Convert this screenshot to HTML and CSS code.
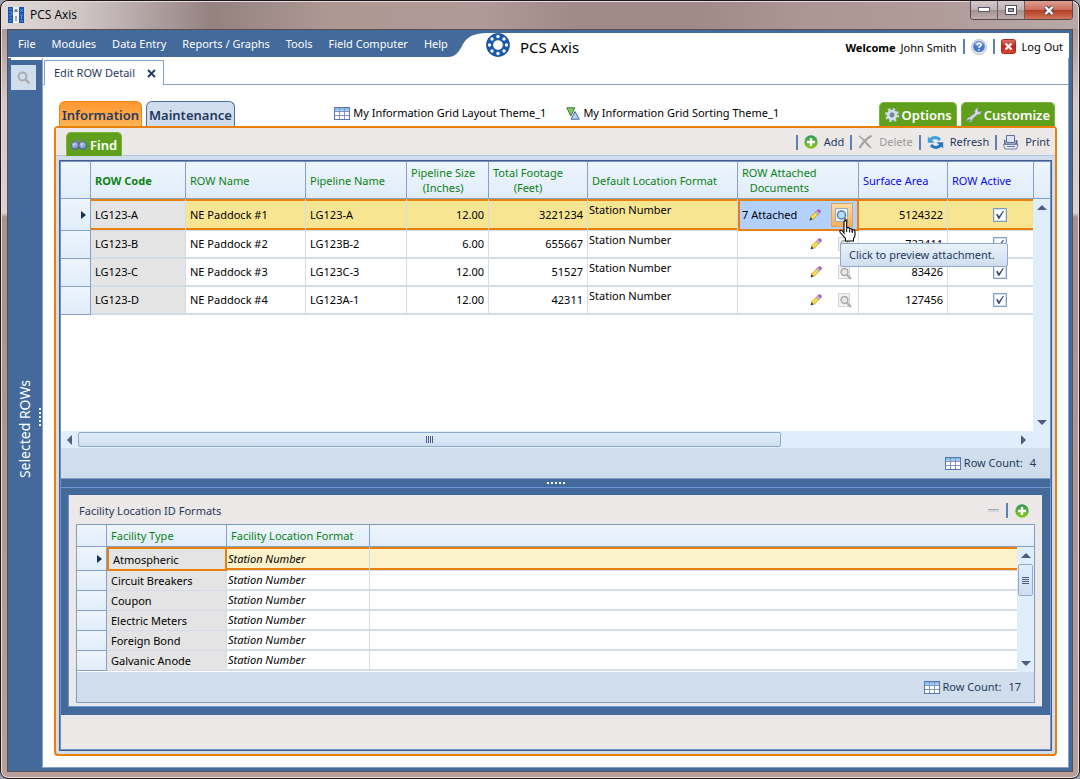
FILE: index.html
```html
<!DOCTYPE html>
<html lang="en">
<head>
<meta charset="utf-8">
<title>PCS Axis</title>
<link rel="stylesheet" href="styles.css">
</head>
<body>
<svg class="defs" aria-hidden="true">
  <defs>
    <linearGradient id="g-add" x1="0" y1="0" x2="0" y2="1"><stop offset="0" stop-color="#2f9a5c"/><stop offset="1" stop-color="#8bc91c"/></linearGradient>
    <linearGradient id="g-red" x1="0" y1="0" x2="0" y2="1"><stop offset="0" stop-color="#dc7468"/><stop offset=".5" stop-color="#c02a18"/><stop offset="1" stop-color="#d84a34"/></linearGradient>
    <linearGradient id="g-grid" x1="0" y1="0" x2="0" y2="1"><stop offset="0" stop-color="#7db4e0"/><stop offset="1" stop-color="#a8d8f4"/></linearGradient>
    <radialGradient id="g-lens" cx=".4" cy=".35" r=".8"><stop offset="0" stop-color="#c3d6f4"/><stop offset="1" stop-color="#46639c"/></radialGradient>
    <symbol id="i-grid" viewBox="0 0 16 13"><rect x=".5" y=".5" width="15" height="12" fill="#fff" stroke="#5878b0"/><rect x="1" y="1" width="14" height="3" fill="url(#g-grid)"/><path d="M1 4.500h14M1 8.500h14M5.500 1v11M10.500 1v11" stroke="#8592c4" fill="none"/></symbol>
    <symbol id="i-add" viewBox="0 0 14 14"><circle cx="7" cy="7" r="6.700" fill="url(#g-add)"/><path d="M7 3v8M3 7h8" stroke="#fff" stroke-width="2.400"/></symbol>
    <symbol id="i-pencil" viewBox="0 0 12 12"><path d="M.5 11.500 1.500 8 3.800 10.400Z" fill="#3b3b3b"/><path d="M1.500 8 6.500 3 9 5.500 3.900 10.400Z" fill="#ffe04a" stroke="#a98428" stroke-width=".7"/><path d="M6.500 3 8 1.500 10.500 4 9 5.500Z" fill="#c6d0ee" stroke="#7482b8" stroke-width=".7"/><path d="M8 1.500Q9.500 0 11 1.200T10.500 4Z" fill="#d45cb8" stroke="#99408c" stroke-width=".6"/></symbol>
    <symbol id="i-preview" viewBox="0 0 14 15"><rect x=".5" y=".5" width="12" height="13" fill="#eef2fa" stroke="#9aaac8"/><path d="m9 10 3.500 3.500" stroke="#8c6a34" stroke-width="2.400"/><circle cx="6.500" cy="7" r="4" fill="#b9def8" stroke="#4c80bc" stroke-width="1.500"/></symbol>
    <symbol id="i-preview-off" viewBox="0 0 14 15"><rect x=".5" y=".5" width="11" height="13" fill="#f3f3f3" stroke="#d3d3d3"/><path d="m9 10 4 4" stroke="#aaa" stroke-width="2.200"/><circle cx="6.500" cy="7" r="3.400" fill="#e8e8e8" stroke="#aaa" stroke-width="1.500"/></symbol>
  </defs>
</svg>

<div class="window">
  <div class="titlebar">
    <svg class="app-icon" width="16" height="16" viewBox="0 0 16 16"><path fill="#1c55ae" d="M0 0h5v16H0zM11 0h5v16h-5z"/><path fill="#f2f3f5" d="M5 0h6v16H5z"/><path d="M1 2h3M1 5h3v3H1M1 11h3M1 14h3M12 2l3 3M15 2l-3 3M12 8h3M13.500 8v4M12 14h3" stroke="#5f91d6" fill="none"/><path d="M6.500 5 8 2l1.500 3M7 4h2M8 9v5" stroke="#596474" fill="none"/></svg>
    <span class="window-title">PCS Axis</span>
    <div class="window-buttons">
      <button class="wb" aria-label="Minimize"><svg width="13" height="6"><rect x=".5" y=".5" width="11" height="4" fill="#fff" stroke="#555a68"/></svg></button>
      <button class="wb" aria-label="Maximize"><svg width="12" height="10"><rect x=".5" y=".5" width="11" height="9" fill="#fff" stroke="#4b5262"/><rect x="3.500" y="3.500" width="5" height="3" fill="#a99e9e" stroke="#4b5262"/></svg></button>
      <button class="wb wb-close" aria-label="Close"><svg width="12" height="11" viewBox="0 0 12 11"><path d="M2.500 2 9.500 9M9.500 2 2.500 9" stroke="#4c4a58" stroke-width="4.400"/><path d="M2.500 2 9.500 9M9.500 2 2.500 9" stroke="#fff" stroke-width="2.400"/></svg></button>
    </div>
  </div>

  <div class="client">
    <header class="header">
      <nav class="menu">
        <button>File</button><button>Modules</button><button>Data Entry</button><button>Reports / Graphs</button><button>Tools</button><button>Field Computer</button><button>Help</button>
      </nav>
      <svg class="swoop" width="38" height="24" viewBox="0 0 38 24"><path fill="#436a9b" d="M0 0h38C20 1 17 7 13 15 9 21 6 24 0 24Z"/></svg>
      <div class="brand">
        <svg width="24" height="24" viewBox="0 0 24 24"><circle cx="12" cy="12" r="8.500" fill="none" stroke="#1559b4" stroke-width="6.400"/><circle cx="12" cy="12" r="11.400" fill="none" stroke="#214a84" stroke-width=".7"/><circle cx="12" cy="12" r="5.200" fill="none" stroke="#214a84" stroke-width=".7"/><g fill="#fff"><circle cx="12" cy="3.500" r="1.700"/><circle cx="12" cy="20.500" r="1.700"/><circle cx="3.500" cy="12" r="1.700"/><circle cx="20.500" cy="12" r="1.700"/><circle cx="6" cy="6" r="1.700"/><circle cx="18" cy="6" r="1.700"/><circle cx="6" cy="18" r="1.700"/><circle cx="18" cy="18" r="1.700"/></g></svg>
        <span>PCS Axis</span>
      </div>
      <div class="account">
        <span class="welcome"><b>Welcome</b><span>John Smith</span></span>
        <i class="sep"></i>
        <button class="plain" aria-label="Help"><svg width="16" height="16" viewBox="0 0 16 16"><circle cx="8" cy="8" r="7.500" fill="#e3e3ea" stroke="#c3c4ce"/><circle cx="8" cy="7.500" r="5.800" fill="#4474cc"/><ellipse cx="8" cy="4.800" rx="4.500" ry="2.800" fill="#9bbbf0" opacity=".6"/><path d="M6 6Q6 4.200 8 4.200T10 6Q10 7 8.800 7.600 8 8 8 9M8 10.200v1.500" fill="none" stroke="#fff" stroke-width="1.500"/></svg></button>
        <i class="sep"></i>
        <button class="plain logout"><svg width="15" height="15" viewBox="0 0 15 15"><rect x=".5" y=".5" width="14" height="14" rx="2" fill="url(#g-red)" stroke="#a42c1e"/><path d="m4.500 4.500 6 6m0-6-6 6" stroke="#fff" stroke-width="2.300"/></svg>Log Out</button>
      </div>
    </header>

    <div class="workspace">
      <aside class="sidebar">
        <button class="side-search" aria-label="Search"><svg width="14" height="14" viewBox="0 0 14 14"><circle cx="5.500" cy="5.500" r="4" fill="none" stroke="#a9abae" stroke-width="2"/><path d="m8.500 8.500 4 4" stroke="#a9abae" stroke-width="2.400"/></svg></button>
        <span class="side-label">Selected ROWs</span>
        <span class="grip grip-v"><i></i><i></i><i></i><i></i><i></i></span>
      </aside>

      <main class="document">
        <div class="doc-tabs">
          <div class="doc-tab">Edit ROW Detail <button class="plain" aria-label="Close tab"><svg width="9" height="9" viewBox="0 0 9 9"><path d="m1 1 7 7m0-7L1 8" stroke="#1f3a5f" stroke-width="1.900"/></svg></button></div>
        </div>

        <div class="content">
          <div class="tabs-row">
            <button class="tab tab-active">Information</button>
            <button class="tab">Maintenance</button>
            <div class="themes">
              <span><svg width="16" height="13"><use href="#i-grid"/></svg>My Information Grid Layout Theme_1</span>
              <span><svg width="14" height="13" viewBox="0 0 14 13"><path d="M.8.8h8L4.800 9Z" fill="#83c966" stroke="#3d7a3c"/><path d="M9 4.500 13.200 12.200H5Z" fill="#b4d4f4" stroke="#46649c"/></svg>My Information Grid Sorting Theme_1</span>
            </div>
            <button class="green-tab"><svg width="16" height="16" viewBox="0 0 16 16"><circle cx="8" cy="8" r="5.800" fill="none" stroke="#c8d1e8" stroke-width="2.600" stroke-dasharray="2.400 2.155"/><circle cx="8" cy="8" r="3.800" fill="none" stroke="#d5dcf0" stroke-width="2.800"/><circle cx="8" cy="8" r="2.200" fill="#7387a8"/></svg>Options</button>
            <button class="green-tab"><svg width="16" height="16" viewBox="0 0 16 16"><path d="M1 14Q.3 10.500 4 10L9 6Q8 2 12 .8L11.500 3.500 13 5l2.500-.8Q15 8 11 7.800L6.500 12Q6 16 2.500 15.200L5 13.500 3.500 12Z" fill="#d5d9e2" stroke="#8b93a4" stroke-width=".7"/></svg>Customize</button>
          </div>

          <section class="panel">
            <div class="toolbar">
              <button class="green-tab find"><svg width="16" height="12" viewBox="0 0 16 12"><circle cx="4.200" cy="6.500" r="4" fill="url(#g-lens)" stroke="#445878" stroke-width=".7"/><circle cx="11.800" cy="6.500" r="4" fill="url(#g-lens)" stroke="#445878" stroke-width=".7"/><path d="M3 1h3v3M10 4V1h3" fill="none" stroke="#6e84a8"/></svg>Find</button>
              <div class="actions">
                <i class="sep"></i>
                <button class="plain"><svg width="14" height="14"><use href="#i-add"/></svg>Add</button>
                <i class="sep"></i>
                <button class="plain" disabled><svg width="15" height="14" viewBox="0 0 15 14"><path d="M1 1Q7 5 13 13L9.500 10Q5 4 1 1Z" fill="#a4a4a4" stroke="#a4a4a4" stroke-width="1.200"/><path d="M13.500.8Q7 4 1.500 13" fill="none" stroke="#a4a4a4" stroke-width="2.300"/></svg>Delete</button>
                <i class="sep"></i>
                <button class="plain"><svg width="17" height="15" viewBox="0 0 17 15"><path d="M3 6Q4.500 2.600 8.300 2.600 11 2.600 13 5" fill="none" stroke="#3f9fe2" stroke-width="3"/><path d="M.8 1.500v6.300h6.700Z" fill="#3f9fe2"/><path d="M14 9Q12.500 12.400 8.700 12.400 6 12.400 4 10" fill="none" stroke="#2277c4" stroke-width="3"/><path d="M16.200 13.500V7.200H9.500Z" fill="#2277c4"/></svg>Refresh</button>
                <i class="sep"></i>
                <button class="plain"><svg width="16" height="15" viewBox="0 0 16 15"><path d="M3.500.5h8v7h-8z" fill="#dce8fa" stroke="#5a6d9c"/><path d="M1 5.500Q1 4.500 2.500 5v3.500h10V5Q14.500 4.500 14.500 6v5.500H1Z" fill="#536690"/><path d="M.5 9.500h14.500l-1.500 4.500H2Z" fill="#eceff8" stroke="#7180a8"/><path d="M4 11.500h8" stroke="#5874ad"/></svg>Print</button>
              </div>
            </div>

            <div class="split">
              <div class="grid-main">
                <table class="rows">
                  <colgroup><col class="c-head"><col class="c-code"><col class="c-name"><col class="c-pipe"><col class="c-size"><col class="c-foot"><col><col class="c-docs"><col class="c-area"><col class="c-act"></colgroup>
                  <thead>
                    <tr><th></th><th class="key">ROW Code</th><th>ROW Name</th><th>Pipeline Name</th><th><div class="two">Pipeline Size<br>(Inches)</div></th><th><div class="two">Total Footage<br>(Feet)</div></th><th>Default Location Format</th><th><div class="two">ROW Attached<br>Documents</div></th><th class="blue">Surface Area</th><th class="blue">ROW Active</th></tr>
                  </thead>
                  <tbody>
                    <tr class="selected">
                      <th><svg width="5" height="8"><path d="M0 0 5 4 0 8Z" fill="#12305c"/></svg></th>
                      <td class="fixed">LG123-A</td><td>NE Paddock #1</td><td>LG123-A</td><td class="num">12.00</td><td class="num">3221234</td><td class="loc">Station Number</td>
                      <td class="docs"><div class="attach"><span>7 Attached</span><button class="plain" aria-label="Edit attachment"><svg width="12" height="12"><use href="#i-pencil"/></svg></button><button class="plain preview-on" aria-label="Preview attachment"><svg width="14" height="15"><use href="#i-preview"/></svg></button>
                        <svg class="pointer" width="17" height="22" viewBox="0 0 17 22"><path d="M5 13V2Q5 .6 6.300.6T7.700 2v6.500Q8 7.300 9.400 7.600t1.200 1.800Q11 8.300 12.200 8.700t1 1.700q.8-1 1.900-.4t.9 1.800V15q0 1.800-1.500 3.500V21H6.500v-2.500L1.200 12.500Q.3 11 1.600 10.300 3 10 5 13Z" fill="#fff" stroke="#000" stroke-width="1.100"/><path d="M7.700 8.500V12M10.600 9.500V12.500M13.400 10.500V13" stroke="#000"/></svg>
                        <span class="tooltip" role="tooltip">Click to preview attachment.</span></div></td>
                      <td class="num">5124322</td><td class="chk"><input type="checkbox" checked aria-label="LG123-A active"></td>
                    </tr>
                    <tr>
                      <th></th><td class="fixed">LG123-B</td><td>NE Paddock #2</td><td>LG123B-2</td><td class="num">6.00</td><td class="num">655667</td><td class="loc">Station Number</td>
                      <td class="docs"><div class="attach"><button class="plain" aria-label="Edit attachment"><svg width="12" height="12"><use href="#i-pencil"/></svg></button><button class="plain" aria-label="Preview attachment"><svg width="14" height="15"><use href="#i-preview-off"/></svg></button></div></td>
                      <td class="num">723411</td><td class="chk"><input type="checkbox" checked aria-label="LG123-B active"></td>
                    </tr>
                    <tr>
                      <th></th><td class="fixed">LG123-C</td><td>NE Paddock #3</td><td>LG123C-3</td><td class="num">12.00</td><td class="num">51527</td><td class="loc">Station Number</td>
                      <td class="docs"><div class="attach"><button class="plain" aria-label="Edit attachment"><svg width="12" height="12"><use href="#i-pencil"/></svg></button><button class="plain" aria-label="Preview attachment"><svg width="14" height="15"><use href="#i-preview-off"/></svg></button></div></td>
                      <td class="num">83426</td><td class="chk"><input type="checkbox" checked aria-label="LG123-C active"></td>
                    </tr>
                    <tr>
                      <th></th><td class="fixed">LG123-D</td><td>NE Paddock #4</td><td>LG123A-1</td><td class="num">12.00</td><td class="num">42311</td><td class="loc">Station Number</td>
                      <td class="docs"><div class="attach"><button class="plain" aria-label="Edit attachment"><svg width="12" height="12"><use href="#i-pencil"/></svg></button><button class="plain" aria-label="Preview attachment"><svg width="14" height="15"><use href="#i-preview-off"/></svg></button></div></td>
                      <td class="num">127456</td><td class="chk"><input type="checkbox" checked aria-label="LG123-D active"></td>
                    </tr>
                  </tbody>
                </table>
                <div class="scroll-side">
                  <div class="cap"></div>
                  <button class="arrow up" aria-label="Scroll up"></button>
                  <div class="space"></div>
                  <button class="arrow down" aria-label="Scroll down"></button>
                </div>
              </div>
              <div class="scroll-bottom">
                <button class="arrow left" aria-label="Scroll left"></button>
                <div class="track"><div class="thumb"><i></i><i></i><i></i><i></i></div></div>
                <button class="arrow right" aria-label="Scroll right"></button>
              </div>
              <div class="count"><svg width="16" height="13"><use href="#i-grid"/></svg>Row Count: <span>4</span></div>

              <div class="splitter"><span class="grip"><i></i><i></i><i></i><i></i><i></i></span></div>

              <div class="sub-frame">
                <section class="sub-panel">
                  <div class="sub-title">
                    <span>Facility Location ID Formats</span>
                    <button class="plain" aria-label="Remove"><svg width="11" height="4"><rect width="11" height="1" fill="#a8a8ac"/><rect y="1" width="11" height="2" fill="#d2dae6"/></svg></button>
                    <i class="sep"></i>
                    <button class="plain" aria-label="Add"><svg width="14" height="14"><use href="#i-add"/></svg></button>
                  </div>
                  <div class="sub-grid">
                    <div class="sub-head"><table class="facility">
                      <colgroup><col class="c-fhead"><col class="c-ftype"><col class="c-fformat"><col></colgroup>
                      <thead><tr><th></th><th>Facility Type</th><th>Facility Location Format</th><th class="last"></th></tr></thead>
                    </table></div>
                    <div class="sub-body">
                      <table class="facility">
                        <colgroup><col class="c-fhead"><col class="c-ftype"><col class="c-fformat"><col></colgroup>
                        <tbody>
                          <tr class="selected"><th><svg width="5" height="8"><path d="M0 0 5 4 0 8Z" fill="#12305c"/></svg></th><td class="fixed">Atmospheric</td><td class="fmt">Station Number</td><td></td></tr>
                          <tr><th></th><td class="fixed">Circuit Breakers</td><td class="fmt">Station Number</td><td></td></tr>
                          <tr><th></th><td class="fixed">Coupon</td><td class="fmt">Station Number</td><td></td></tr>
                          <tr><th></th><td class="fixed">Electric Meters</td><td class="fmt">Station Number</td><td></td></tr>
                          <tr><th></th><td class="fixed">Foreign Bond</td><td class="fmt">Station Number</td><td></td></tr>
                          <tr><th></th><td class="fixed">Galvanic Anode</td><td class="fmt">Station Number</td><td></td></tr>
                        </tbody>
                      </table>
                      <div class="scroll-side">
                        <button class="arrow up" aria-label="Scroll up"></button>
                        <div class="space"><div class="thumb thumb-v"><i></i><i></i><i></i><i></i></div></div>
                        <button class="arrow down" aria-label="Scroll down"></button>
                      </div>
                    </div>
                    <div class="count count-sub"><svg width="16" height="13"><use href="#i-grid"/></svg>Row Count: <span>17</span></div>
                  </div>
                </section>
              </div>
              <div class="tail"></div>
            </div>
          </section>
        </div>
      </main>
    </div>
  </div>
</div>
</body>
</html>
```
FILE: styles.css
```css
:root {
  --blue: #436a9b;
  --line: #86a0c6;
  --cell: #d3dce8;
  --orange: #e9800b;
  --navy: #1f3a5f;
  --green: #5f9f1c;
  --pale: #d0dded;
  --gray: #ece8e7;
}
* { box-sizing: border-box; }
body {
  margin: 0;
  background: #9aa0ac;
  color: #000;
  font: 11px/16px "Noto Sans", "Open Sans", sans-serif;
}
svg { display: block; flex: none; }
.defs { position: absolute; width: 0; height: 0; }
button { font: inherit; color: inherit; border: 0; padding: 0; margin: 0; background: none; }
.plain { display: flex; align-items: center; }

.window {
  display: flex;
  flex-direction: column;
  min-height: 100vh;
  padding: 0 6px 6px;
  border: 1px solid #1d1719;
  border-radius: 8px;
  box-shadow: inset 0 0 0 1px #e8dedd;
  background: linear-gradient(#b39e9c 0, #b09c9b 30px, #d6c8c8 100px, #dccfcf 212px, #ab908d 216px, #b79f9a 100%);
}
.titlebar {
  display: flex;
  align-items: flex-start;
  height: 28px;
  margin: 0 -5px;
  padding: 0 5px 0 6px;
  border-radius: 7px 7px 0 0;
  background: linear-gradient(90deg, #e0d8d8 0, #cfc5c5 80px, #a69696 170px, #95817f 210px, #ad9894 330px, #af9a97 480px, #a18b8a 570px, #a08b88 700px, #ab9693 800px, #b09b99 930px, #b9a8a7 100%);
  box-shadow: inset 0 1px #e5dcdc;
}
.app-icon { margin-top: 6px; }
.window-title { margin: 6px 0 0 6px; font-family: "Open Sans", sans-serif; font-size: 12px; }
.window-buttons {
  display: flex;
  margin-left: auto;
  height: 19px;
  border: 1px solid #564a50;
  border-top: 0;
  border-radius: 0 0 4px 4px;
  overflow: hidden;
}
.wb {
  display: grid;
  place-items: center;
  width: 27px;
  border-right: 1px solid #6a5b60;
  background: linear-gradient(#d5c9ca, #bfb1b3 50%, #a3918f 51%, #bdadab);
}
.wb-close { width: 47px; border: 0; background: linear-gradient(#dca093, #cd6b58 50%, #b13b23 51%, #d4745a); }

.client {
  flex: 1;
  display: flex;
  flex-direction: column;
  border: 1px solid #55504f;
  background: var(--blue);
}
.header {
  display: flex;
  height: 28px;
  padding: 3px 3px 0 0;
  background: linear-gradient(var(--blue) 3px, #fff 3px) left / calc(100% - 3px) 100% no-repeat;
}
.menu {
  display: flex;
  gap: 16px;
  padding-left: 10px;
  height: 24px;
  background: var(--blue);
  color: #fff;
}
.menu button { padding-bottom: 2px; }
.swoop { height: 24px; }
.brand { display: flex; gap: 10px; height: 24px; font-size: 15px; }
.brand span { padding-top: 6px; }
.account { display: flex; align-items: center; gap: 6px; height: 27px; margin-left: auto; padding: 0 6px 0 0; }
.welcome { display: flex; gap: 5px; padding-top: 2px; }
.sep { width: 2px; height: 15px; background: #5c82b4; }
.logout { gap: 6px; }

.workspace { flex: 1; display: flex; padding: 0 3px 3px 0; }
.sidebar {
  display: grid;
  grid-template-columns: 28px 3px;
  grid-template-rows: auto 1fr;
  width: 34px;
  padding: 7px 0 0 3px;
  background: linear-gradient(#fff, #fff) 3px 0 / 31px 2px no-repeat;
}
.side-search { width: 25px; height: 25px; background: var(--pale); display: grid; place-items: center; }
.side-label {
  grid-row: 2;
  grid-column: 1;
  place-self: center;
  writing-mode: vertical-rl;
  transform: rotate(180deg);
  color: #fff;
  font-size: 14px;
}
.grip { display: flex; gap: 2px; }
.grip i { width: 2px; height: 2px; background: #fff; }
.grip-v { grid-column: 2; grid-row: 1 / 3; flex-direction: column; align-self: center; }

.document { flex: 1; min-width: 0; display: flex; flex-direction: column; background: #fff; border: solid var(--line); border-width: 0 1px 1px; }
.doc-tabs { display: flex; height: 27px; padding-top: 2px; border-bottom: 1px solid var(--line); }
.doc-tab {
  display: flex;
  align-items: center;
  gap: 12px;
  height: 25px;
  padding: 0 7px 0 9px;
  margin-left: 1px;
  border: 1px solid var(--line);
  border-bottom: 0;
  background: #fff;
  color: var(--navy);
}
.content { flex: 1; display: flex; flex-direction: column; padding: 16px 11px 11px 11px; }
.tabs-row { display: flex; gap: 4px; height: 25px; padding: 0 2px 0 5px; }
.tab {
  border: 1px solid #4a6ea2;
  border-bottom: 0;
  border-radius: 6px 6px 0 0;
  padding: 2px 2px 0;
  background: var(--pale);
  color: var(--navy);
  font-size: 13px;
  font-weight: 600;
}
.tab-active { background: linear-gradient(#ff9732, #ffb454); border-color: #ea8214; }
.themes { flex: 1; display: flex; justify-content: center; gap: 20px; padding: 4px 0 0; }
.themes span { display: flex; gap: 3px; height: 16px; align-items: center; }
.green-tab {
  display: flex;
  align-items: center;
  gap: 2px;
  padding: 0 4px;
  margin-top: 1px;
  border: 1px solid #7bb33f;
  border-bottom: 0;
  border-radius: 5px 5px 0 0;
  background: var(--green);
  color: #fff;
  font-size: 13px;
  font-weight: 600;
}

.panel {
  flex: 1;
  display: flex;
  flex-direction: column;
  padding: 0 3px 3px;
  border: 2px solid var(--orange);
  border-radius: 4px;
  background: var(--pale);
}
.toolbar {
  display: flex;
  height: 28px;
  margin: 0 -3px 4px;
  padding: 4px 5px 0 10px;
  border-bottom: 1px solid #b7c8de;
  background: var(--gray);
}
.find { margin: 0; height: 24px; gap: 3px; }
.actions { display: flex; align-items: center; gap: 6px; height: 20px; margin-left: auto; color: var(--navy); }
.actions .plain { gap: 6px; }
.actions .plain:disabled { color: #9a9a9a; }

.split {
  flex: 1;
  display: flex;
  flex-direction: column;
  border: 1px solid #4c5b86;
  box-shadow: inset 0 0 0 1px #6a94d2;
  padding: 1px;
  background: var(--blue);
}
.grid-main { flex: 1; display: flex; align-items: stretch; background: #fff; }
table { border-collapse: separate; border-spacing: 0; table-layout: fixed; }
.rows { flex: 1; align-self: flex-start; min-width: 0; }
.c-head { width: 30px; }
.c-code { width: 95px; }
.c-name { width: 120px; }
.c-pipe { width: 101px; }
.c-size { width: 82px; }
.c-foot { width: 99px; }
.c-docs { width: 121px; }
.c-area { width: 89px; }
.c-act { width: 85px; }
th { padding: 0 4px; text-align: left; font-weight: 400; border: solid var(--line); border-width: 0 1px 1px 0; background: linear-gradient(#eef5fd, #e0edf9); }
thead th { color: #0b8212; white-space: nowrap; }
.rows thead th { height: 37px; line-height: 15px; }
.rows thead .key { font-weight: 700; }
.rows thead .blue { color: #0a0af0; }
.rows thead .blue:last-child { border-right: 0; }
.two { width: fit-content; text-align: center; }
tbody th svg { margin-left: auto; }
td { padding: 0 4px; border: solid var(--cell); border-width: 0 1px 2px 0; white-space: nowrap; }
.rows tbody tr { height: 28px; }
.rows tbody tr.selected { height: 32px; }
td.fixed { background: #e4e4e4; }
.num { text-align: right; }
.loc { vertical-align: top; padding: 1px; }
.selected .loc { padding-top: 3px; }
.chk { padding: 0 0 0 19px; }
.rows td:last-child { border-right: 0; }
tr.selected td { border-bottom-width: 0; box-shadow: inset 0 2px var(--orange), inset 0 -1px var(--cell), inset 0 -3px var(--orange); background: #f8e592; }
tr.selected td.fixed { background: #e4e4e4; }
.rows .selected .docs { background: #b2d1ff; box-shadow: inset 0 0 0 2px var(--orange); border: 0; }
.docs { padding: 0 6px 0 4px; }
.attach { position: relative; display: flex; align-items: center; justify-content: flex-end; gap: 16px; }
.attach > span:first-child { margin-right: auto; }
.selected .attach { gap: 10px; }
.preview-on { width: 22px; height: 24px; justify-content: center; border: 1px solid #e0a25a; background: linear-gradient(#fbdca4, #f3b056); }
.pointer { position: absolute; z-index: 3; left: 97px; top: 17px; }
.tooltip {
  position: absolute;
  z-index: 2;
  left: 98px;
  top: 40px;
  padding: 3px 12px 3px 8px;
  border: 1px solid #8eabcf;
  border-radius: 2px;
  background: linear-gradient(#e9f2fc, #cfdeef);
  color: var(--navy);
}
input[type="checkbox"] {
  appearance: none;
  display: block;
  position: relative;
  width: 14px;
  height: 14px;
  margin: 0 auto;
  border: 1px solid #7f9dc4;
  background: #fff;
  box-shadow: inset 0 0 0 1px #d3e0f0;
}
input[type="checkbox"]::after {
  content: "";
  position: absolute;
  inset: 2px;
  background: #3d4f78;
  clip-path: polygon(0 45%, 18% 35%, 38% 65%, 85% 0, 100% 0, 42% 100%, 30% 100%);
}

.scroll-side { display: flex; flex-direction: column; width: 17px; background: #e0edfb; }
.cap { height: 37px; border: solid var(--line); border-width: 0 0 1px 1px; background: linear-gradient(#eef5fd, #e0edf9); }
.space { flex: 1; }
.arrow { display: grid; place-items: center; width: 17px; height: 17px; }
.arrow::before { content: ""; border: 5px solid transparent; }
.up::before { border-top: 0; border-bottom-color: #4d5c82; }
.down::before { border-bottom: 0; border-top-color: #4d5c82; }
.left::before { border-left: 0; border-right-color: #4d5c82; }
.right::before { border-right: 0; border-left-color: #4d5c82; }
.scroll-bottom { display: flex; padding-right: 18px; background: #e0edfb; }
.track { flex: 1; padding: 1px 0; }
.thumb {
  display: flex;
  justify-content: center;
  align-items: center;
  gap: 1px;
  width: 75%;
  height: 15px;
  border: 1px solid #8eabcf;
  border-radius: 2px;
  background: linear-gradient(#e0eefa, #cfdef0);
}
.thumb i { width: 1px; height: 7px; background: #4d5c82; }
.thumb-v { flex-direction: column; width: 15px; height: 32px; margin: 0 1px; }
.thumb-v i { width: 7px; height: 1px; }
.count {
  display: flex;
  align-items: center;
  justify-content: flex-end;
  gap: 3px;
  height: 31px;
  padding-right: 14px;
  background: var(--pale);
  border-bottom: 1px solid #7f9cc2;
  color: var(--navy);
}
.count span { margin-left: 4px; }
.count-sub { border: 0; height: 30px; padding-right: 13px; }
.splitter { display: flex; justify-content: center; height: 9px; padding-top: 3px; border-bottom: 1px solid #6a94d2; }
.sub-frame { padding: 7px 8px 8px 7px; }
.sub-panel { padding: 0 7px 3px; background: var(--gray); border: solid #6a94d2; border-width: 0 0 1px 1px; }
.sub-title { display: flex; align-items: center; gap: 7px; height: 29px; padding: 2px 6px 0 3px; color: var(--navy); }
.sub-title > span { margin-right: auto; }
.sub-grid { border: 1px solid #7f9cc2; background: var(--pale); }
.facility { width: 100%; }
.sub-body { display: flex; align-items: flex-start; background: #fff; }
.sub-body .facility { flex: 1; min-width: 0; }
.c-fhead { width: 30px; }
.c-ftype { width: 120px; }
.c-fformat { width: 143px; }
.facility thead th { height: 22px; }
.facility thead .last { border-right: 0; }
.facility tbody tr { height: 20px; }
.facility tbody tr.selected { height: 24px; }
.facility .selected td { background: #fcf2cb; }
.facility .selected td.fixed { background: #e4e4e4; box-shadow: inset 0 0 0 2px var(--orange); padding-left: 6px; border: 0; }
.facility td.fixed { border-bottom-width: 1px; padding-top: 1px; }
.fmt { font-style: italic; padding: 0 1px; }
.facility td:last-child { border-right: 0; }
.sub-body .scroll-side { height: 125px; }
.tail { height: 34px; background: var(--gray); }
```
